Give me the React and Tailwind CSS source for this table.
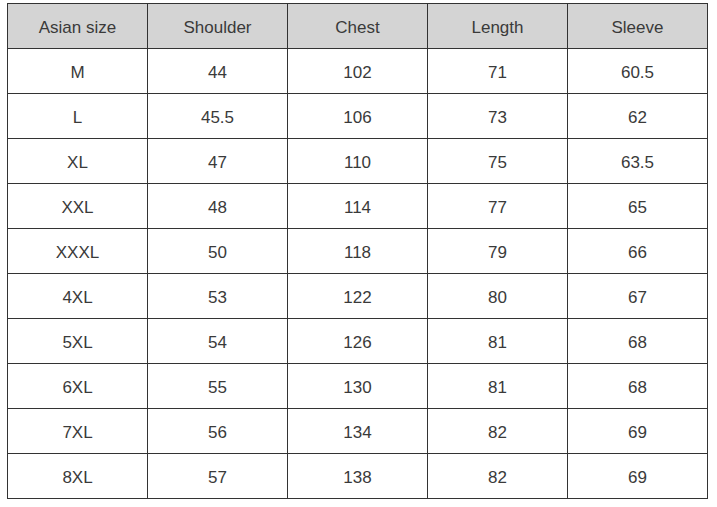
import React from "react";

const headers = ["Asian size", "Shoulder", "Chest", "Length", "Sleeve"];

const rows = [
  ["M", "44", "102", "71", "60.5"],
  ["L", "45.5", "106", "73", "62"],
  ["XL", "47", "110", "75", "63.5"],
  ["XXL", "48", "114", "77", "65"],
  ["XXXL", "50", "118", "79", "66"],
  ["4XL", "53", "122", "80", "67"],
  ["5XL", "54", "126", "81", "68"],
  ["6XL", "55", "130", "81", "68"],
  ["7XL", "56", "134", "82", "69"],
  ["8XL", "57", "138", "82", "69"],
];

export default function App() {
  return (
    <div className="w-[717px] h-[507px] bg-white pt-[3px] pl-[7px] font-['Liberation_Sans',Arial,sans-serif] text-[17px] text-[#3a3a3a]">
      <div className="w-[701px] border-l border-t border-[#333]">
        {/* header */}
        <div className="flex bg-[#d4d4d4]">
          {headers.map((h) => (
            <div
              key={h}
              className="w-[140px] h-[45px] pt-[4px] flex items-center justify-center border-r border-b border-[#333]"
            >
              {h}
            </div>
          ))}
        </div>
        {rows.map((r) => (
          <div key={r[0]} className="flex bg-white">
            {r.map((c, i) => (
              <div
                key={i}
                className="w-[140px] h-[45px] pt-[4px] flex items-center justify-center border-r border-b border-[#333]"
              >
                {c}
              </div>
            ))}
          </div>
        ))}
      </div>
    </div>
  );
}
